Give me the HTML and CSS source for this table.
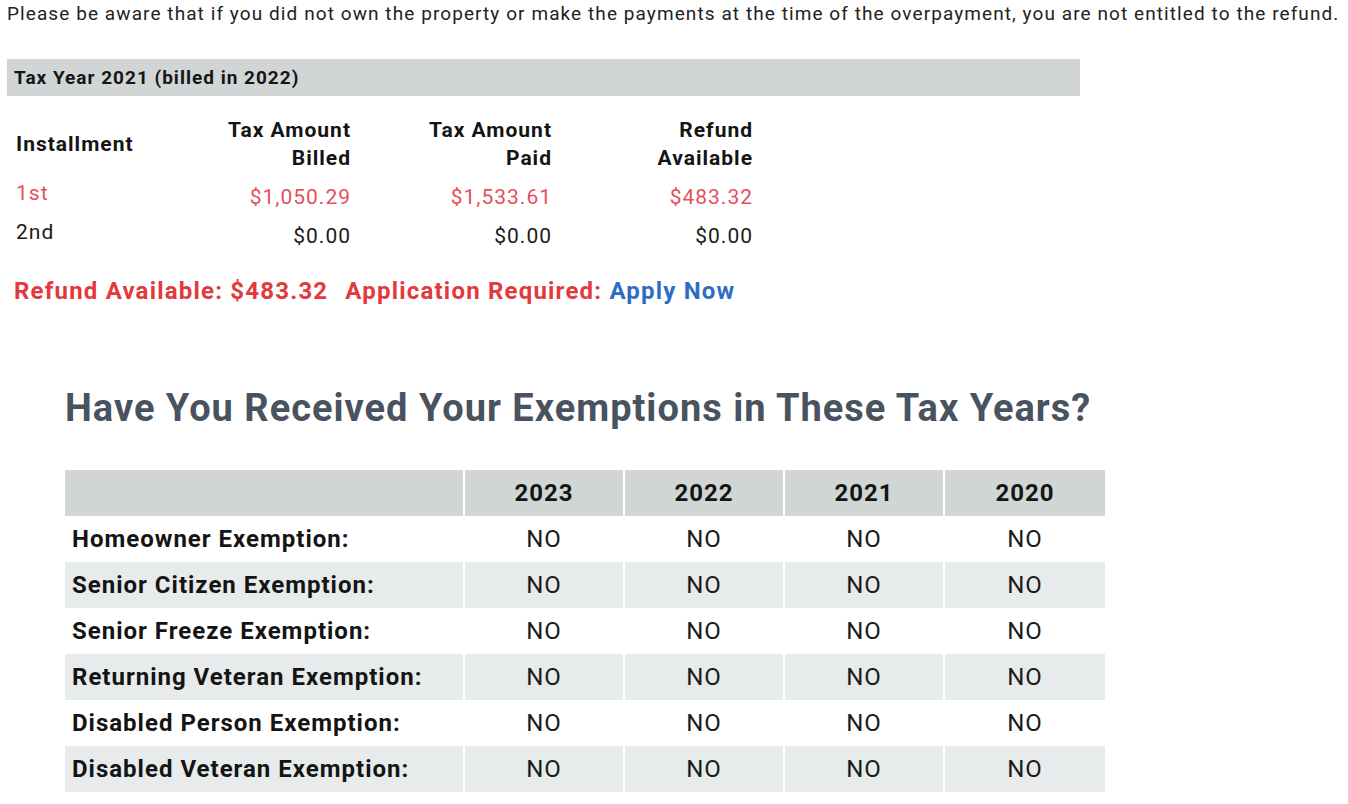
FILE: index.html
```html
<!DOCTYPE html>
<html lang="en">
<head>
<meta charset="utf-8">
<title>Tax Refund</title>
<link rel="stylesheet" href="styles.css">
</head>
<body>
<p class="notice">Please be aware that if you did not own the property or make the payments at the time of the overpayment, you are not entitled to the refund.</p>

<div class="year-bar">Tax Year 2021 (billed in 2022)</div>

<table class="inst-table">
  <thead>
    <tr>
      <th class="c-inst">Installment</th>
      <th class="c-num">Tax Amount<br>Billed</th>
      <th class="c-num">Tax Amount<br>Paid</th>
      <th class="c-num">Refund<br>Available</th>
    </tr>
  </thead>
  <tbody>
    <tr class="due">
      <td class="c-inst">1st</td>
      <td class="c-num">$1,050.29</td>
      <td class="c-num">$1,533.61</td>
      <td class="c-num">$483.32</td>
    </tr>
    <tr>
      <td class="c-inst">2nd</td>
      <td class="c-num">$0.00</td>
      <td class="c-num">$0.00</td>
      <td class="c-num">$0.00</td>
    </tr>
  </tbody>
</table>

<p class="refund-line"><span class="refund-amt">Refund Available: $483.32</span><span class="refund-app">Application Required: <a href="#" class="apply">Apply Now</a></span></p>

<section class="exemptions">
  <h2 class="ex-title">Have You Received Your Exemptions in These Tax Years?</h2>
  <table class="ex-table">
    <thead>
      <tr>
        <th class="ex-label"></th>
        <th class="ex-year">2023</th>
        <th class="ex-year">2022</th>
        <th class="ex-year">2021</th>
        <th class="ex-year ex-last">2020</th>
      </tr>
    </thead>
    <tbody>
      <tr><th class="ex-label">Homeowner Exemption:</th><td>NO</td><td>NO</td><td>NO</td><td>NO</td></tr>
      <tr><th class="ex-label">Senior Citizen Exemption:</th><td>NO</td><td>NO</td><td>NO</td><td>NO</td></tr>
      <tr><th class="ex-label">Senior Freeze Exemption:</th><td>NO</td><td>NO</td><td>NO</td><td>NO</td></tr>
      <tr><th class="ex-label">Returning Veteran Exemption:</th><td>NO</td><td>NO</td><td>NO</td><td>NO</td></tr>
      <tr><th class="ex-label">Disabled Person Exemption:</th><td>NO</td><td>NO</td><td>NO</td><td>NO</td></tr>
      <tr><th class="ex-label">Disabled Veteran Exemption:</th><td>NO</td><td>NO</td><td>NO</td><td>NO</td></tr>
    </tbody>
  </table>
</section>
</body>
</html>
```
FILE: styles.css
```css
* { box-sizing: border-box; }

html, body {
  margin: 0;
  padding: 0;
  background: #ffffff;
}

body {
  font-family: Roboto, "Noto Sans", "Liberation Sans", sans-serif;
  color: #1b1b1b;
  padding: 0 7px;
  letter-spacing: 1px;
}

.notice {
  margin: 0;
  padding-top: 2px;
  font-size: 19px;
  line-height: 24px;
  color: #222;
  letter-spacing: 1.08px;
  white-space: nowrap;
}

.year-bar {
  margin-top: 33px;
  width: 1073px;
  height: 37px;
  line-height: 37px;
  background: #d1d5d6;
  padding-left: 7px;
  font-weight: 700;
  font-size: 19px;
  color: #151515;
}

.inst-table {
  margin-top: 20px;
  margin-left: 9px;
  border-collapse: collapse;
  font-size: 21px;
}

.inst-table th {
  font-weight: 700;
  line-height: 28px;
  padding: 0 0 4px 0;
  vertical-align: middle;
  color: #141414;
}

.inst-table td {
  line-height: 24px;
  padding: 9px 0 6px 0;
  color: #1b1b1b;
}

.inst-table .c-inst {
  width: 134px;
  text-align: left;
}

.inst-table .c-num {
  width: 201px;
  text-align: right;
}

.inst-table td.c-inst {
  padding-top: 5px;
  padding-bottom: 10px;
}

.inst-table tr.due td {
  color: #e5505a;
}

.refund-line {
  margin: 21px 0 0 7px;
  font-size: 24px;
  line-height: 32px;
  font-weight: 700;
  letter-spacing: 1.2px;
  color: #e2393d;
}

.refund-amt {
  margin-right: 17px;
}

.apply {
  color: #2f6dc3;
  text-decoration: none;
}

.exemptions {
  margin-left: 56px;
  margin-top: 78px;
}

.ex-title {
  margin: 0 0 0 2px;
  font-size: 38px;
  line-height: 46px;
  font-weight: 700;
  color: #48535f;
}

.ex-table {
  margin-top: 39px;
  border-collapse: separate;
  border-spacing: 2px 0;
  font-size: 24px;
}

.ex-table th,
.ex-table td {
  height: 46px;
  padding: 0;
  vertical-align: middle;
}

.ex-table thead th {
  background: #d1d5d6;
  font-weight: 700;
  color: #141414;
  text-align: center;
}

.ex-table .ex-label {
  width: 398px;
  text-align: left;
  padding-left: 7px;
}

.ex-table tbody th.ex-label {
  font-weight: 700;
  color: #141414;
}

.ex-table .ex-year {
  width: 158px;
}

.ex-table .ex-last {
  width: 160px;
}

.ex-table td {
  text-align: center;
  color: #1b1b1b;
}

.ex-table tbody tr:nth-child(even) th,
.ex-table tbody tr:nth-child(even) td {
  background: #e8ebec;
}
```
